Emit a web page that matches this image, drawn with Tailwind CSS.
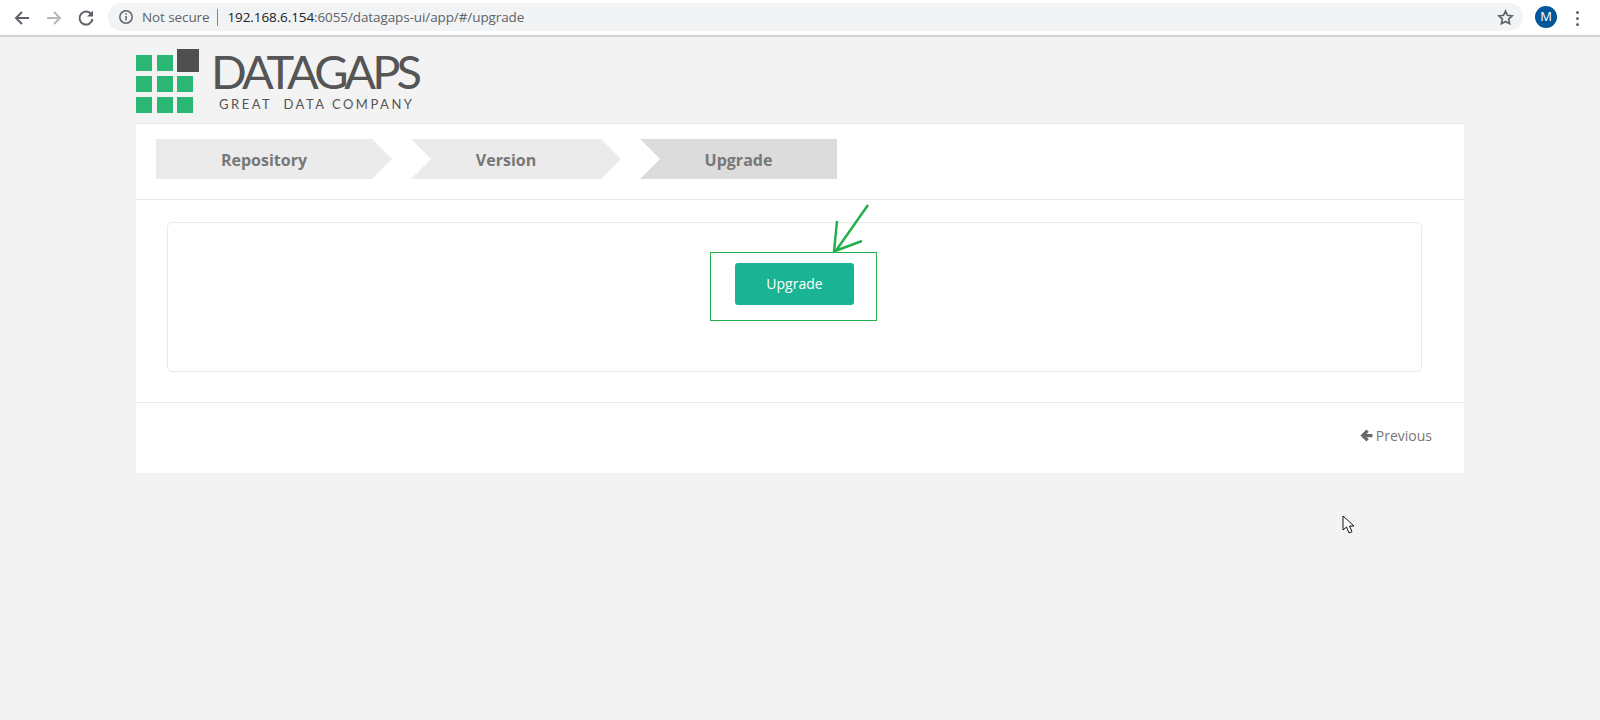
<!DOCTYPE html>
<html lang="en">
<head>
    <meta charset="UTF-8">
    <meta name="viewport" content="width=device-width, initial-scale=1.0">
    <title>Datagaps Upgrade</title>
    <script src="https://cdn.jsdelivr.net/npm/@tailwindcss/browser@4"></script>
</head>
<body class="relative h-[720px] overflow-hidden bg-[#f3f3f4] font-['Open_Sans',sans-serif]">
    <!-- browser toolbar -->
    <div class="flex h-[37px] items-start border-b-2 border-[#d0d3d7] bg-white">
        <div class="flex h-[35px] w-[108px] items-center pl-[13px] gap-[14px]">
            <svg class="w-[18px] h-[18px]" viewBox="0 0 18 18" fill="none" stroke="#5f6368" stroke-width="2"><path d="M16 9H3M9 3L3 9l6 6"/></svg>
            <svg class="w-[18px] h-[18px]" viewBox="0 0 18 18" fill="none" stroke="#b4b6b9" stroke-width="2"><path d="M2 9h13M9 3l6 6-6 6"/></svg>
            <svg class="w-[18px] h-[18px]" viewBox="0 0 18 18" fill="none" stroke="#5f6368" stroke-width="2"><path d="M14.5 5.5A6.5 6.5 0 1 0 15.5 10"/><path d="M16 1.5v6h-6z" fill="#5f6368" stroke="none"/></svg>
        </div>
        <div class="mt-[3px] flex h-[28px] w-[1415px] items-center rounded-full bg-[#f1f3f4] pl-[10px] pr-[9px] text-[13.5px] text-[#5f6368]">
            <svg class="w-[16px] h-[16px]" viewBox="0 0 16 16" fill="none" stroke="#5f6368" stroke-width="1.5"><circle cx="8" cy="8" r="6.2"/><path d="M8 7v4.5M8 4.2v1.6"/></svg>
            <span class="ml-[8px] tracking-[-0.1px]">Not secure</span>
            <span class="ml-[8px] mr-[9px] h-[17px] w-px bg-[#80868b]"></span>
            <span class="tracking-[-0.1px]"><span class="text-[#202124]">192.168.6.154</span>:6055/datagaps-ui/app/#/upgrade</span>
            <svg class="ml-auto w-[17px] h-[17px]" viewBox="0 0 18 18" fill="none" stroke="#5f6368" stroke-width="1.8"><path d="M9 2.200l2.100 4.500 4.900.6-3.600 3.400.9 4.900L9 13.200l-4.300 2.400.9-4.900L2 7.300l4.900-.6z"/></svg>
        </div>
        <div class="ml-[12px] mt-[6px] flex h-[22px] w-[22px] items-center justify-center rounded-full bg-[#01579b] text-[13px] text-white">M</div>
        <div class="ml-[19px] mt-[11px] flex flex-col gap-[3px]">
            <span class="h-[3px] w-[3px] rounded-full bg-[#5f6368]"></span>
            <span class="h-[3px] w-[3px] rounded-full bg-[#5f6368]"></span>
            <span class="h-[3px] w-[3px] rounded-full bg-[#5f6368]"></span>
        </div>
    </div>

    <!-- logo -->
    <div class="flex h-[86px] pl-[136px] pt-[12px]">
        <svg class="w-[63px] h-[64px]" viewBox="0 0 63 64">
            <rect x="41" y="0" width="22" height="23" fill="#4f4f4f"/>
            <g fill="#2ab673">
                <rect x="0" y="6" width="16" height="16"/><rect x="21" y="6" width="16" height="16"/>
                <rect x="0" y="27" width="16" height="16"/><rect x="21" y="27" width="16" height="16"/><rect x="41" y="27" width="16" height="16"/>
                <rect x="0" y="48" width="16" height="16"/><rect x="21" y="48" width="16" height="16"/><rect x="41" y="48" width="16" height="16"/>
            </g>
        </svg>
        <div class="ml-[12px] flex flex-col font-['Lato',sans-serif] text-[#555]">
            <span class="h-[47px] text-[47px] font-normal leading-[44px] tracking-[-3.9px]">DATAGAPS</span>
            <span class="ml-[8px] whitespace-pre text-[13px] leading-[16px] tracking-[2.5px]">GREAT  DATA COMPANY</span>
        </div>
    </div>

    <!-- wizard panel -->
    <div class="relative ml-[136px] w-[1328px] border-t border-[#e7eaec] bg-white">
        <div class="flex h-[76px] gap-[19px] border-b border-[#e7eaec] pl-[20px] pt-[15px] text-[16px] font-bold text-[#777]">
            <div class="flex h-[40px] w-[236px] items-center justify-center bg-[#ebebeb] pr-[20px] pt-[2px] [clip-path:polygon(0_0,216px_0,100%_50%,216px_100%,0_100%)]">Repository</div>
            <div class="flex h-[40px] w-[210px] items-center justify-center bg-[#ebebeb] pr-[20px] pt-[2px] [clip-path:polygon(0_0,190px_0,100%_50%,190px_100%,0_100%,20px_50%)]">Version</div>
            <div class="flex h-[40px] w-[197px] items-center justify-center bg-[#dcdcdc] pt-[2px] [clip-path:polygon(0_0,100%_0,100%_100%,0_100%,20px_50%)]">Upgrade</div>
        </div>
        <div class="border-b border-[#e7eaec] pb-[30px] pl-[31px] pr-[42px] pt-[22px]">
            <div class="flex h-[150px] justify-center rounded-[5px] border border-[#e7eaec] pt-[40px]">
                <button class="h-[42px] w-[119px] rounded-[3px] bg-[#1ab394] pb-[2px] text-[14px] font-medium text-white">Upgrade</button>
            </div>
        </div>
        <div class="flex h-[70px] items-center justify-end pb-[5px] pr-[32px] text-[14px] text-[#777]">
            <svg class="mr-[3px] w-[13px] h-[13px]" viewBox="0 0 12 12" fill="none" stroke="#676a6c" stroke-width="3"><path d="M11.500 6H2.500M7 1.500L2.500 6 7 10.500"/></svg>
            Previous
        </div>

        <!-- annotation drawn over the page -->
        <div class="absolute left-[574px] top-[128px] h-[69px] w-[167px] border border-[#22b14c]"></div>
        <svg class="absolute left-[690px] top-[78px] w-[50px] h-[52px]" viewBox="0 0 50 52" fill="none" stroke="#22b14c" stroke-width="2.500"><path d="M42 3L9 50M11 19L8 50M36 39L9 49"/></svg>
    </div>

    <!-- mouse pointer -->
    <svg class="absolute left-[1342px] top-[515px] w-[14px] h-[20px]" viewBox="0 0 14 20" fill="white" stroke="#111" stroke-width="1"><path d="M1 1v14l3.500-3 2.500 6 3-1.300-2.500-5.700h4.500z"/></svg>
</body>
</html>
